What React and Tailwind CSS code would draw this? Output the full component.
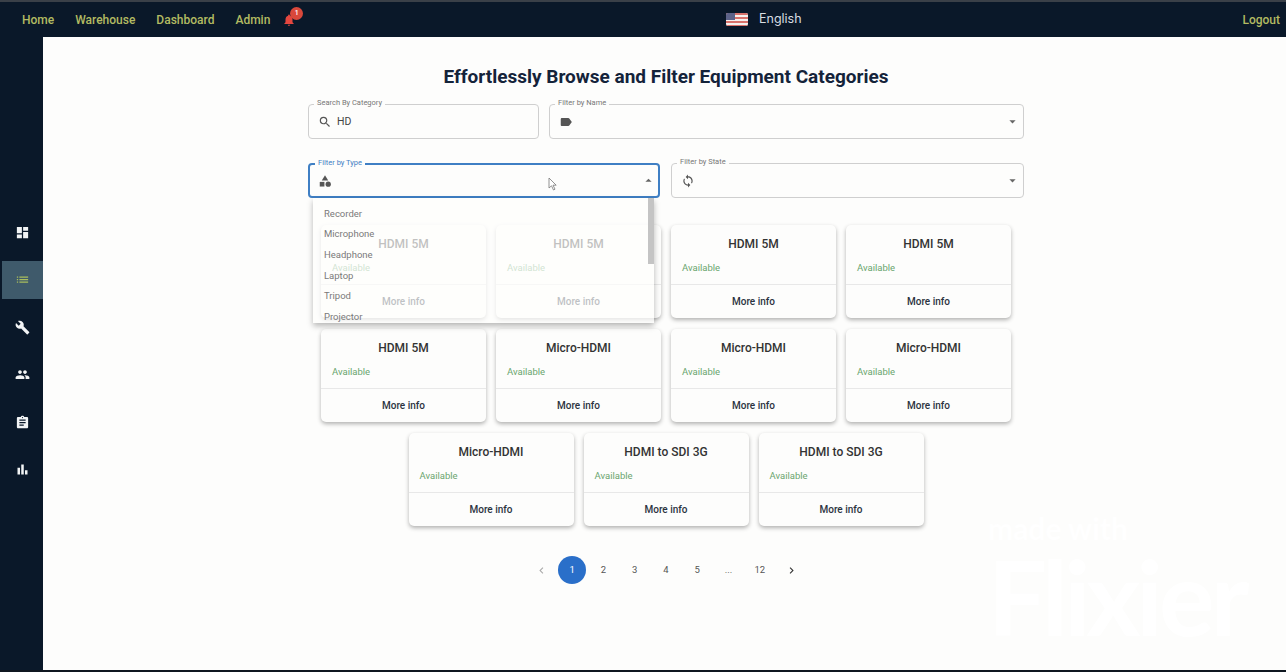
import {
  MdDashboard, MdList, MdBuild, MdPeople, MdAssignment, MdBarChart, MdSearch, MdLabel, MdCategory, MdSync,
  MdArrowDropDown, MdArrowDropUp, MdNotifications, MdChevronLeft, MdChevronRight,
} from 'react-icons/md';

const navLinks = ['Home', 'Warehouse', 'Dashboard', 'Admin'];
const sideIcons = [MdDashboard, MdList, MdBuild, MdPeople, MdAssignment, MdBarChart];
const types = ['Recorder', 'Microphone', 'Headphone', 'Laptop', 'Tripod', 'Projector', 'Camera'];
const cards = [
  'HDMI 5M', 'HDMI 5M', 'HDMI 5M', 'HDMI 5M',
  'HDMI 5M', 'Micro-HDMI', 'Micro-HDMI', 'Micro-HDMI',
  'Micro-HDMI', 'HDMI to SDI 3G', 'HDMI to SDI 3G',
];
const pages = ['1', '2', '3', '4', '5', '...', '12'];

const Flag = () => (
  <svg width="22" height="13" viewBox="0 0 22 13" className="rounded-[2px]">
    <rect width="22" height="13" fill="#f7f1ee" />
    <rect y="0" width="22" height="2" fill="#d9726b" />
    <rect y="4" width="22" height="2" fill="#d9726b" />
    <rect y="8" width="22" height="2" fill="#d9726b" />
    <rect y="12" width="22" height="1" fill="#d9726b" />
    <rect width="9" height="7" fill="#5c6288" />
  </svg>
);

const Field = ({ label, icon: Icon, value, width, focused, arrow: Arrow, children }) => (
  <div
    className={`relative h-[35px] flex items-center rounded-[4px] bg-[#fdfdfc] ${width} ${
      focused ? 'pl-[8px] pr-[2px] border-2 border-[#3f7fc4]' : 'pl-[9px] pr-[3px] border border-[#cfcfcf]'
    }`}
  >
    <span
      className={`absolute -top-[7px] left-[5px] px-[3px] bg-[#fdfdfc] text-[7.5px] leading-[10px] ${
        focused ? 'text-[#3f7fc4]' : 'text-[#777777]'
      }`}
    >
      {label}
    </span>
    <Icon className="text-[#555555] shrink-0" size={14} />
    {value && <span className="ml-[5px] text-[10.5px] text-[#444444]">{value}</span>}
    {Arrow && <Arrow className="ml-auto text-[#666666]" size={15} />}
    {children}
  </div>
);

const Card = ({ title }) => (
  <div className="w-[165px] h-[93px] rounded-[5px] bg-[#fdfdfc] shadow-[0_2px_4px_rgba(0,0,0,0.3)] flex flex-col">
    <div className="pt-[11px] text-center text-[12px] leading-[16px] font-medium text-[#333333]">{title}</div>
    <div className="mt-[9px] pl-[11px] text-[9.5px] leading-[14px] text-[#6aa56e]">Available</div>
    <div className="mt-[9px] pb-[1px] flex-1 border-t border-[#e8e8e8] flex items-center justify-center text-[10px] font-medium text-[#2b3340]">
      More info
    </div>
  </div>
);

export default function App() {
  return (
    <div className="h-screen w-full flex flex-col overflow-hidden bg-[#fdfdfc] font-[Roboto,sans-serif] border-b-2 border-[#0f1720]">
      <header className="h-[37px] shrink-0 bg-[#0a1829] border-t-2 border-[#3a4048] flex items-center pl-[22px] pr-[6px] text-[12px] font-medium text-[#b3bb62]">
        <nav className="w-[600px] flex items-center gap-[21px]">
          {navLinks.map((link) => (
            <span key={link}>{link}</span>
          ))}
          <span className="relative -ml-[9px] text-[#e5473f]">
            <MdNotifications size={14} />
            <span className="absolute -top-[6px] left-[8px] w-[13px] h-[13px] rounded-full bg-[#d9483b] text-white text-[7px] leading-[13px] text-center">
              1
            </span>
          </span>
        </nav>
        <div className="ml-[104px] flex items-center gap-[11px] text-[12.5px] font-normal text-[#d8dde2] font-[Inter,sans-serif]">
          <Flag />
          <span>English</span>
        </div>
        <span className="ml-auto">Logout</span>
      </header>

      <div className="relative flex flex-1 min-h-0">
        <aside className="w-[43px] shrink-0 bg-[#0a1829] pt-[176px] pl-[2px] flex flex-col gap-[9.5px]">
          {sideIcons.map((Icon, i) => (
            <div
              key={i}
              className={`h-[38px] flex items-center justify-center ${
                i === 1 ? 'bg-[#3f5a6b] text-[#a9bd5e]' : 'text-[#f2f4f5]'
              }`}
            >
              <Icon size={15} />
            </div>
          ))}
        </aside>

        <main className="flex-1 pl-[3px] pt-[26px]">
          <div className="w-[716px] mx-auto flex flex-col">
            <h1 className="text-center text-[19px] leading-[28px] font-bold text-[#14233a]">
              Effortlessly Browse and Filter Equipment Categories
            </h1>
            <div className="mt-[13px] flex gap-[10px]">
              <Field label="Search By Category" icon={MdSearch} value="HD" width="w-[231px]" />
              <Field label="Filter by Name" icon={MdLabel} arrow={MdArrowDropDown} width="flex-1" />
            </div>
            <div className="relative z-10 mt-[24px] flex gap-[11px]">
              <Field label="Filter by Type" icon={MdCategory} arrow={MdArrowDropUp} width="w-[352px]" focused>
                <svg width="11" height="14" viewBox="0 0 11 14" className="absolute left-[238px] top-[12px]">
                  <path d="M1 1v10l2.5-2.2L5.5 13l1.5-.8-2-4h3.2z" fill="#ffffff" stroke="#777777" strokeWidth="0.8" />
                </svg>
              </Field>
              <Field label="Filter by State" icon={MdSync} arrow={MdArrowDropDown} width="flex-1" />
              <div className="absolute left-[5px] top-[35px] w-[341px] h-[125px] overflow-hidden bg-[#fdfdfc]/70 shadow-[0_3px_6px_rgba(0,0,0,0.28)]">
                <ul className="pt-[8.5px] pl-[11px]">
                  {types.map((type) => (
                    <li key={type} className="h-[20.7px] text-[9.5px] leading-[14px] text-[#7a7a7a]">
                      {type}
                    </li>
                  ))}
                </ul>
                <div className="absolute right-0 top-0 w-[6px] h-[66px] bg-[#c4c4c4]" />
              </div>
            </div>
            <div className="mt-[27px] flex flex-wrap justify-center gap-x-[10px] gap-y-[11px]">
              {cards.map((title, i) => (
                <Card key={i} title={title} />
              ))}
            </div>
            <div className="mt-[30px] flex items-center justify-center gap-[3.25px] text-[9.5px] text-[#555555]">
              <span className="w-[28px] h-[28px] flex items-center justify-center text-[#aaaaaa]">
                <MdChevronLeft size={13} />
              </span>
              {pages.map((page) => (
                <span
                  key={page}
                  className={`w-[28px] h-[28px] flex items-center justify-center rounded-full ${
                    page === '1' ? 'bg-[#2a6fc9] text-white' : ''
                  }`}
                >
                  {page}
                </span>
              ))}
              <span className="w-[28px] h-[28px] flex items-center justify-center text-[#333333]">
                <MdChevronRight size={13} />
              </span>
            </div>
          </div>
        </main>

        {/* flixier watermark, barely visible on the page */}
        <div className="absolute left-[988px] top-[474px] text-white font-[Lato,sans-serif] font-bold pointer-events-none">
          <div className="text-[30px] leading-[34px]">made with</div>
          <div className="mt-[3px] text-[104px] leading-[96px] tracking-[-4px]">Flixier</div>
        </div>
      </div>
    </div>
  );
}
